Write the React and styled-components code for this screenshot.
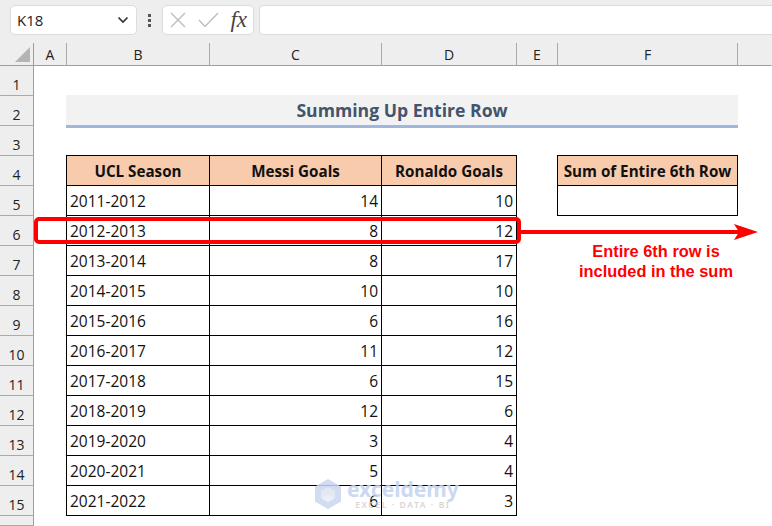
import React from 'react';
import styled, { createGlobalStyle } from 'styled-components';

const GlobalStyle = createGlobalStyle`
  html, body {
    margin: 0;
    padding: 0;
    background: #fff;
  }
  body {
    width: 772px;
    height: 526px;
    overflow: hidden;
    font-family: "Open Sans", "Liberation Sans", sans-serif;
  }
`;

const Page = styled.div`
  width: 772px;
  height: 526px;
  overflow: hidden;
`;

const FormulaBar = styled.div`
  height: 43px;
  box-sizing: border-box;
  background: #eeeeee;
  padding: 5px 0 0 10px;
  display: flex;
  align-items: flex-start;
`;

const Box = styled.div`
  height: 30px;
  box-sizing: border-box;
  background: #fff;
  border: 1px solid #dcdcdc;
  border-radius: 5px;
  display: flex;
  align-items: center;
`;

const NameBox = styled(Box)`
  width: 127px;
  padding: 0 7px 0 6px;
  justify-content: space-between;
  font-size: 15px;
  color: #222;
`;

const Dots = styled.div`
  width: 25px;
  display: flex;
  flex-direction: column;
  align-items: center;
  gap: 2px;
  padding-top: 9px;
  span {
    width: 3px;
    height: 3px;
    background: #555;
  }
`;

const FxBox = styled(Box)`
  width: 92px;
  padding: 0 6px 0 7px;
  justify-content: space-between;
`;

const Fx = styled.span`
  font-family: "Liberation Serif", serif;
  font-style: italic;
  font-size: 23px;
  line-height: 26px;
  color: #444;
`;

const FormulaInput = styled(Box)`
  flex: 1;
  margin-left: 5px;
  border-right: none;
  border-radius: 5px 0 0 5px;
`;

const Sheet = styled.div`
  position: relative;
  display: grid;
  grid-template-columns: 34px 33px 143px 172px 135px 41px 180px 34px;
  grid-template-rows: 23px repeat(15, 30px) 10px;
  height: 483px;
  color: #111;
`;

const Corner = styled.div`
  background: #eeeeee;
  border-right: 1px solid #9e9e9e;
  border-bottom: 1px solid #9e9e9e;
  box-sizing: border-box;
  position: relative;
  &::after {
    content: '';
    position: absolute;
    right: 3px;
    bottom: 3px;
    border-style: solid;
    border-width: 0 0 15px 15px;
    border-color: transparent transparent #b4b4b4 transparent;
  }
`;

const ColHead = styled.div`
  background: #eeeeee;
  border-bottom: 1px solid #9e9e9e;
  border-right: 1px solid ${(p) => (p.$last ? 'transparent' : '#aaaaaa')};
  box-sizing: border-box;
  display: flex;
  align-items: center;
  justify-content: center;
  font-size: 14px;
  color: #222;
`;

const RowHead = styled.div`
  background: #eeeeee;
  border-right: 1px solid #9e9e9e;
  border-bottom: 1px solid #aaaaaa;
  box-sizing: border-box;
  display: flex;
  align-items: center;
  justify-content: center;
  padding-top: 7px;
  font-size: 14px;
  color: #222;
`;

const Blank = styled.div`
  grid-column: ${(p) => p.$span || 'auto'};
`;

const Title = styled.div`
  grid-column: 3 / 8;
  background: #f2f2f2;
  border-bottom: 3px solid #9fb6df;
  margin: -1px 0 -2px -1px;
  display: flex;
  align-items: center;
  justify-content: center;
  font-size: 17.6px;
  font-weight: 700;
  color: #44546a;
`;

const Cell = styled.div`
  box-sizing: border-box;
  background: ${(p) => (p.$head ? '#f8cbad' : '#fff')};
  border-right: 1px solid #000;
  border-bottom: 1px solid #000;
  border-left: ${(p) => (p.$first ? '1px solid #000' : 'none')};
  border-top: ${(p) => (p.$head ? '1px solid #000' : 'none')};
  margin-left: ${(p) => (p.$first ? '-1px' : '0')};
  margin-top: ${(p) => (p.$head ? '-1px' : '0')};
  display: flex;
  align-items: center;
  justify-content: ${(p) => (p.$head ? 'center' : p.$num ? 'flex-end' : 'flex-start')};
  padding: ${(p) => (p.$head ? '0' : '0 3px')};
  font-size: ${(p) => (p.$head ? '15.2px' : '15.5px')};
  font-weight: ${(p) => (p.$head ? 700 : 400)};
  white-space: nowrap;
`;

const RowMark = styled.div`
  position: absolute;
  left: 34px;
  top: 174px;
  width: 487px;
  height: 27px;
  box-sizing: border-box;
  border: 4px solid #ff0000;
  border-radius: 5px;
`;

const Arrow = styled.svg`
  position: absolute;
  left: 518px;
  top: 179px;
`;

const Note = styled.div`
  position: absolute;
  left: 556px;
  top: 198px;
  width: 200px;
  text-align: center;
  font-family: "Liberation Sans", sans-serif;
  font-size: 16.4px;
  font-weight: 700;
  line-height: 20px;
  color: #ff0000;
`;

const Watermark = styled.div`
  position: absolute;
  left: 314px;
  top: 435px;
  display: flex;
  align-items: center;
  gap: 5px;
  opacity: 0.85;
`;

const WatermarkText = styled.div`
  display: flex;
  flex-direction: column;
  align-items: center;
`;

const WatermarkName = styled.div`
  font-family: "Noto Sans", sans-serif;
  font-size: 21px;
  font-weight: 700;
  line-height: 22px;
  color: #c3d3f2;
`;

const WatermarkTag = styled.div`
  font-family: "Noto Sans", sans-serif;
  font-size: 8.5px;
  font-weight: 600;
  letter-spacing: 1.6px;
  line-height: 10px;
  color: #cfcfcf;
`;

const columns = ['A', 'B', 'C', 'D', 'E', 'F'];

const data = [
  ['2011-2012', 14, 10],
  ['2012-2013', 8, 12],
  ['2013-2014', 8, 17],
  ['2014-2015', 10, 10],
  ['2015-2016', 6, 16],
  ['2016-2017', 11, 12],
  ['2017-2018', 6, 15],
  ['2018-2019', 12, 6],
  ['2019-2020', 3, 4],
  ['2020-2021', 5, 4],
  ['2021-2022', 6, 3],
];

const TableRow = ({ num, cells, side }) => (
  <>
    <RowHead>{num}</RowHead>
    <Blank />
    {cells}
    <Blank />
    {side || <Blank />}
    <Blank />
  </>
);

const App = () => {
  return (
    <Page>
      <GlobalStyle />
      <FormulaBar>
        <NameBox>
          K18
          <svg width="12" height="8" viewBox="0 0 12 8">
            <path d="M1.5 1.5 L6 6 L10.5 1.5" fill="none" stroke="#333" strokeWidth="1.7" />
          </svg>
        </NameBox>
        <Dots>
          <span />
          <span />
          <span />
        </Dots>
        <FxBox>
          <svg width="16" height="16" viewBox="0 0 16 16">
            <path d="M1 1 L15 15 M15 1 L1 15" stroke="#bdbdbd" strokeWidth="1.4" fill="none" />
          </svg>
          <svg width="21" height="16" viewBox="0 0 21 16">
            <path d="M1 8 L7 14.5 L20 1" stroke="#bdbdbd" strokeWidth="1.4" fill="none" />
          </svg>
          <Fx>fx</Fx>
        </FxBox>
        <FormulaInput />
      </FormulaBar>
      <Sheet>
        <Corner />
        {columns.map((c) => (
          <ColHead key={c}>{c}</ColHead>
        ))}
        <ColHead $last />

        <RowHead>1</RowHead>
        <Blank $span="2 / 9" />

        <RowHead>2</RowHead>
        <Blank />
        <Title>Summing Up Entire Row</Title>
        <Blank />

        <RowHead>3</RowHead>
        <Blank $span="2 / 9" />

        <TableRow
          num={4}
          cells={
            <>
              <Cell $head $first>UCL Season</Cell>
              <Cell $head>Messi Goals</Cell>
              <Cell $head>Ronaldo Goals</Cell>
            </>
          }
          side={<Cell $head $first>Sum of Entire 6th Row</Cell>}
        />
        {data.map((row, i) => (
          <TableRow
            key={row[0]}
            num={i + 5}
            cells={
              <>
                <Cell $first>{row[0]}</Cell>
                <Cell $num>{row[1]}</Cell>
                <Cell $num>{row[2]}</Cell>
              </>
            }
            side={i === 0 ? <Cell $first /> : null}
          />
        ))}
        <RowHead />

        <RowMark />
        <Arrow width="242" height="20" viewBox="0 0 242 20">
          <path d="M0 8 H222 V12 H0 Z" fill="#ff0000" />
          <path d="M216 2 L240 10 L216 18 L221 10 Z" fill="#ff0000" />
        </Arrow>
        <Note>
          Entire 6th row is
          <br />
          included in the sum
        </Note>
        <Watermark>
          <svg width="28" height="32" viewBox="0 0 28 32">
            <path d="M14 1 L27 8.5 V23.5 L14 31 L1 23.5 V8.5 Z" fill="#c9d7f1" />
            <path d="M14 9 L21 13 V20 L14 16.5 L7 20 V13 Z" fill="#dfe5ef" />
            <path d="M14 16.5 L21 20 L14 24.5 L7 20 Z" fill="#e8edf6" />
          </svg>
          <WatermarkText>
            <WatermarkName>exceldemy</WatermarkName>
            <WatermarkTag>EXCEL · DATA · BI</WatermarkTag>
          </WatermarkText>
        </Watermark>
      </Sheet>
    </Page>
  );
};

export default App;
